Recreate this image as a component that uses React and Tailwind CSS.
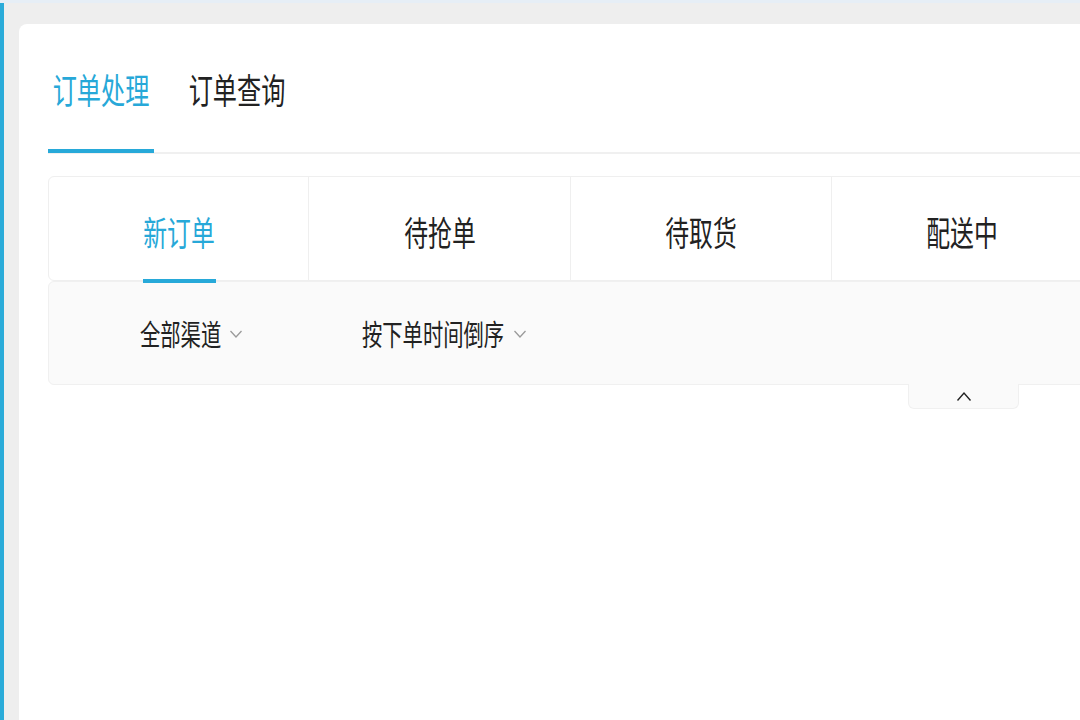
import React from "react";

const FONT = { fontFamily: '"Noto Sans CJK SC", "Noto Sans", sans-serif' };

function ChevronDown() {
  return (
    <svg width="14" height="10" viewBox="0 0 14 10" className="shrink-0">
      <polyline points="1.5,2 7,8 12.5,2" fill="none" stroke="#9a9a9a" strokeWidth="1.3" />
    </svg>
  );
}

function ChevronUp() {
  return (
    <svg width="16" height="12" viewBox="0 0 16 12">
      <polyline points="1.5,10.5 8,3 14.5,10.5" fill="none" stroke="#222222" strokeWidth="1.4" />
    </svg>
  );
}

export default function App() {
  return (
    <div className="w-[1080px] h-[720px] overflow-hidden flex flex-col bg-[#eeeeee]" style={FONT}>
      <div className="h-[3px] shrink-0 bg-[#e6eef6]" />
      <div className="flex flex-1 min-h-0">
        <div className="w-[4px] shrink-0 bg-[#2aabd9]" />
        <div className="flex-1 pl-[15px] pt-[21px] min-w-0">
          <div className="w-[1100px] h-full bg-white rounded-tl-[8px] pl-[29px]">
            {/* top tabs */}
            <div className="flex h-[130px] border-b-2 border-[#f0f0f0]">
              <div className="relative w-[106px] flex justify-center pt-[47px]">
                <span className="block shrink-0 whitespace-nowrap text-[35px] leading-[35px] scale-x-[0.69] text-[#27a8d8]">
                  订单处理
                </span>
                <div className="absolute left-0 right-0 bottom-[-1px] h-[4px] bg-[#27a9d9]" />
              </div>
              <div className="relative ml-[30px] w-[106px] flex justify-center pt-[47px]">
                <span className="block shrink-0 whitespace-nowrap text-[35px] leading-[35px] scale-x-[0.69] text-[#222222]">
                  订单查询
                </span>
              </div>
            </div>

            {/* sub tabs */}
            <div className="mt-[22px] flex h-[105px] border border-[#efefef] rounded-[6px] bg-white">
              <div className="relative w-[260px] flex justify-center pt-[38px] border-r border-[#efefef]">
                <span className="block shrink-0 whitespace-nowrap text-[34px] leading-[34px] scale-x-[0.7] text-[#27a8d8]">
                  新订单
                </span>
                <div className="absolute left-[94px] w-[73px] bottom-[-3px] h-[4px] bg-[#27a9d9]" />
              </div>
              <div className="w-[262px] flex justify-center pt-[38px] border-r border-[#efefef]">
                <span className="block shrink-0 whitespace-nowrap text-[34px] leading-[34px] scale-x-[0.7] text-[#222222]">
                  待抢单
                </span>
              </div>
              <div className="w-[261px] flex justify-center pt-[38px] border-r border-[#efefef]">
                <span className="block shrink-0 whitespace-nowrap text-[34px] leading-[34px] scale-x-[0.7] text-[#222222]">
                  待取货
                </span>
              </div>
              <div className="w-[261px] flex justify-center pt-[38px] border-r border-[#efefef]">
                <span className="block shrink-0 whitespace-nowrap text-[34px] leading-[34px] scale-x-[0.7] text-[#222222]">
                  配送中
                </span>
              </div>
            </div>

            {/* filters */}
            <div className="flex items-center h-[104px] border border-[#f0f0f0] rounded-[6px] bg-[#fafafa] pl-[91px]">
              <div className="flex items-center">
                <div className="w-[84px] flex justify-start">
                  <span className="block shrink-0 whitespace-nowrap text-[29px] leading-[30px] scale-x-[0.7] origin-left text-[#222222]">
                    全部渠道
                  </span>
                </div>
                <div className="ml-[5px] mt-[2px]">
                  <ChevronDown />
                </div>
              </div>
              <div className="flex items-center ml-[119px]">
                <div className="w-[147px] flex justify-start">
                  <span className="block shrink-0 whitespace-nowrap text-[29px] leading-[30px] scale-x-[0.7] origin-left text-[#222222]">
                    按下单时间倒序
                  </span>
                </div>
                <div className="ml-[4px] mt-[2px]">
                  <ChevronDown />
                </div>
              </div>
            </div>

            {/* collapse handle */}
            <div className="ml-[860px] w-[111px] h-[25px] -mt-px flex justify-center items-center bg-[#fafafa] border border-t-0 border-[#f0f0f0] rounded-b-[6px]">
              <ChevronUp />
            </div>
          </div>
        </div>
      </div>
    </div>
  );
}
